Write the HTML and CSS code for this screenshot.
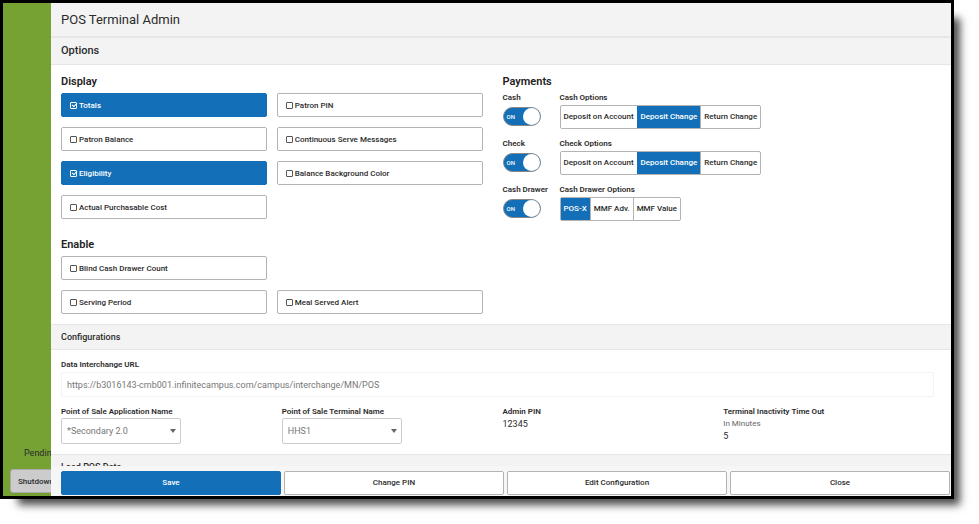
FILE: index.html
```html
<!DOCTYPE html>
<html lang="en">
<head>
    <meta charset="UTF-8">
    <meta name="viewport" content="width=device-width, initial-scale=1.0">
    <title>POS Terminal Admin</title>
    <link rel="stylesheet" href="styles.css">
</head>
<body>

    <div class="window">
        <aside class="sidebar">
            <p>Pending</p>
            <button type="button" class="shutdown">Shutdown</button>
        </aside>

        <main class="panel">
            <h1>POS Terminal Admin</h1>

            <div class="content">
                <h2 class="band">Options</h2>

                <div class="options">
                    <section class="settings">
                        <h3>Display</h3>
                        <div class="tiles">
                            <label class="tile"><input type="checkbox" checked>Totals</label>
                            <label class="tile"><input type="checkbox">Patron PIN</label>
                            <label class="tile"><input type="checkbox">Patron Balance</label>
                            <label class="tile"><input type="checkbox">Continuous Serve Messages</label>
                            <label class="tile"><input type="checkbox" checked>Eligibility</label>
                            <label class="tile"><input type="checkbox">Balance Background Color</label>
                            <label class="tile"><input type="checkbox">Actual Purchasable Cost</label>
                        </div>

                        <h3>Enable</h3>
                        <div class="tiles">
                            <label class="tile wide-row"><input type="checkbox">Blind Cash Drawer Count</label>
                            <label class="tile"><input type="checkbox">Serving Period</label>
                            <label class="tile"><input type="checkbox">Meal Served Alert</label>
                        </div>
                    </section>

                    <section class="payments">
                        <h3>Payments</h3>
                        <div class="payment">
                            <div>
                                <label class="caption" for="cash">Cash</label>
                                <label class="toggle"><input type="checkbox" id="cash" checked><span>ON</span></label>
                            </div>
                            <div role="radiogroup" aria-labelledby="cashOptions">
                                <span class="caption" id="cashOptions">Cash Options</span>
                                <div class="segments">
                                    <label><input type="radio" name="cash">Deposit on Account</label>
                                    <label><input type="radio" name="cash" checked>Deposit Change</label>
                                    <label><input type="radio" name="cash">Return Change</label>
                                </div>
                            </div>
                        </div>
                        <div class="payment">
                            <div>
                                <label class="caption" for="check">Check</label>
                                <label class="toggle"><input type="checkbox" id="check" checked><span>ON</span></label>
                            </div>
                            <div role="radiogroup" aria-labelledby="checkOptions">
                                <span class="caption" id="checkOptions">Check Options</span>
                                <div class="segments">
                                    <label><input type="radio" name="check">Deposit on Account</label>
                                    <label><input type="radio" name="check" checked>Deposit Change</label>
                                    <label><input type="radio" name="check">Return Change</label>
                                </div>
                            </div>
                        </div>
                        <div class="payment">
                            <div>
                                <label class="caption" for="drawer">Cash Drawer</label>
                                <label class="toggle"><input type="checkbox" id="drawer" checked><span>ON</span></label>
                            </div>
                            <div role="radiogroup" aria-labelledby="drawerOptions">
                                <span class="caption" id="drawerOptions">Cash Drawer Options</span>
                                <div class="segments">
                                    <label><input type="radio" name="drawer" checked>POS-X</label>
                                    <label><input type="radio" name="drawer">MMF Adv.</label>
                                    <label><input type="radio" name="drawer">MMF Value</label>
                                </div>
                            </div>
                        </div>
                    </section>
                </div>

                <h2 class="band small">Configurations</h2>

                <div class="config">
                    <div class="url">
                        <label class="caption" for="url">Data Interchange URL</label>
                        <input type="text" id="url" value="https://b3016143-cmb001.infinitecampus.com/campus/interchange/MN/POS" readonly>
                    </div>
                    <div>
                        <label class="caption" for="appName">Point of Sale Application Name</label>
                        <div class="select">
                            <select id="appName"><option>*Secondary 2.0</option></select>
                        </div>
                    </div>
                    <div>
                        <label class="caption" for="terminalName">Point of Sale Terminal Name</label>
                        <div class="select">
                            <select id="terminalName"><option>HHS1</option></select>
                        </div>
                    </div>
                    <div>
                        <span class="caption">Admin PIN</span>
                        <p class="value">12345</p>
                    </div>
                    <div>
                        <span class="caption">Terminal Inactivity Time Out</span>
                        <p class="hint">In Minutes</p>
                        <p class="value">5</p>
                    </div>
                </div>

                <h2 class="band small">Load POS Data</h2>
            </div>

            <footer>
                <button type="button" class="primary">Save</button>
                <button type="button">Change PIN</button>
                <button type="button">Edit Configuration</button>
                <button type="button">Close</button>
            </footer>
        </main>
    </div>

</body>
</html>
```

FILE: styles.css
```css
* {
    box-sizing: border-box;
}

body {
    margin: 0;
    padding: 0 25px 25px 0;
    height: 100vh;
    background-color: #fff;
    color: #2b2b2b;
    font-family: Roboto, "Liberation Sans", sans-serif;
    font-size: 8px;
    font-weight: 500;
}

h1, h2, h3, p {
    margin: 0;
}

button, input, select {
    margin: 0;
    font: inherit;
    color: inherit;
}

.window {
    display: flex;
    height: 100%;
    border: 3px solid #000;
    box-shadow: 12px 12px 8px -6px rgba(0, 0, 0, 0.7);
}

/* Home screen behind the panel */
.sidebar {
    display: flex;
    flex-direction: column;
    justify-content: flex-end;
    flex: 0 0 48px;
    padding: 0 0 3px 7px;
    overflow: hidden;
    background-color: #76a133;
}

.sidebar p {
    padding-left: 14px;
    margin-bottom: 8px;
    font-size: 9px;
    font-weight: 400;
    line-height: 16px;
}

.shutdown {
    width: 60px;
    height: 24px;
    padding: 0 7px;
    border: 1px solid #aaa;
    border-radius: 3px;
    background-color: #ccc;
    text-align: left;
}

.panel {
    display: flex;
    flex-direction: column;
    flex: 1;
    min-width: 0;
    background-color: #fff;
}

h1 {
    flex: none;
    padding: 0 10px;
    border-bottom: 2px solid #e6e6e6;
    background-color: #f3f3f3;
    font-size: 13px;
    font-weight: 400;
    line-height: 33px;
}

.content {
    flex: 1;
    min-height: 0;
    overflow: hidden;
}

.band {
    padding: 0 10px;
    border-bottom: 1px solid #e6e6e6;
    background-color: #f3f3f3;
    font-size: 11px;
    font-weight: 500;
    line-height: 26px;
}

.band.small {
    border-top: 1px solid #e6e6e6;
    font-size: 9px;
    line-height: 24px;
}

.options {
    display: grid;
    grid-template-columns: 1fr 1fr;
    padding: 9px 7px 10px 10px;
}

h3 {
    margin-bottom: 3px;
    color: #222;
    font-size: 11px;
    font-weight: 600;
    line-height: 16px;
}

.settings {
    padding-right: 20px;
}

.tiles {
    display: grid;
    grid-template-columns: 1fr 1fr;
    gap: 10px;
}

.tiles + h3 {
    margin-top: 18px;
}

.tile {
    display: flex;
    align-items: center;
    gap: 2px;
    height: 24px;
    padding: 0 8px;
    border: 1px solid #b3b3b3;
    border-radius: 2px;
}

.tile.wide-row {
    margin-right: calc(50% + 5px);
    grid-column: span 2;
}

.tile input {
    position: relative;
    width: 7px;
    height: 7px;
    border: 1px solid #555;
    border-radius: 1px;
    appearance: none;
}

.tile input:checked {
    border-color: #fff;
}

.tile input:checked::after {
    content: "";
    position: absolute;
    top: 0;
    left: 1px;
    width: 4px;
    height: 2px;
    border-bottom: 1px solid #fff;
    border-left: 1px solid #fff;
    transform: rotate(-45deg);
}

.tile:has(:checked) {
    border-color: #126fb8;
    background-color: #126fb8;
    color: #fff;
}

.caption {
    display: block;
    font-weight: 600;
    line-height: 12px;
    white-space: nowrap;
}

.payments h3 {
    margin-bottom: 2px;
}

.payment {
    display: grid;
    grid-template-columns: 57px auto;
    justify-content: start;
    margin-bottom: 9px;
}

.toggle {
    display: block;
    position: relative;
    width: 38px;
    height: 19px;
    margin-top: 3px;
    border: 1px solid #888;
    border-radius: 10px;
    background-color: #126fb8;
    color: #fff;
    font-size: 6px;
    line-height: 17px;
}

.toggle span {
    padding-left: 3px;
}

.toggle::after {
    content: "";
    position: absolute;
    top: 0;
    right: 0;
    width: 17px;
    height: 17px;
    border-radius: 50%;
    background-color: #fff;
}

.toggle input,
.segments input {
    position: absolute;
    opacity: 0;
}

.segments {
    display: flex;
    width: max-content;
    margin-top: 1px;
    border: 1px solid #b3b3b3;
    border-radius: 2px;
}

.segments label {
    position: relative;
    padding: 0 3px;
    line-height: 22px;
}

.segments label + label {
    border-left: 1px solid #b3b3b3;
}

.segments label:has(:checked) {
    border-color: #126fb8;
    background-color: #126fb8;
    color: #fff;
}

.config {
    display: grid;
    grid-template-columns: repeat(4, 1fr);
    row-gap: 9px;
    padding: 9px 7px 10px 10px;
}

.url {
    grid-column: 1 / -1;
    padding-right: 10px;
}

.url input {
    width: 100%;
    height: 25px;
    margin-top: 1px;
    padding: 0 5px;
    border: 1px solid #f3f3f3;
    border-radius: 2px;
    background-color: #fff;
    color: #777;
    font-size: 9px;
    font-weight: 400;
}

.select {
    position: relative;
    width: 120px;
}

.select select {
    display: block;
    width: 100%;
    height: 26px;
    padding: 0 5px;
    border: 1px solid #ccc;
    border-radius: 2px;
    background-color: #fff;
    color: #777;
    font-size: 9px;
    font-weight: 400;
    appearance: none;
}

.select::after {
    content: "";
    position: absolute;
    top: 11px;
    right: 5px;
    border: 3px solid transparent;
    border-top: 4px solid #666;
    border-bottom: 0;
}

.value {
    font-size: 9px;
    font-weight: 400;
    line-height: 13px;
}

.hint {
    color: #666;
    font-weight: 400;
    line-height: 12px;
}

footer {
    display: grid;
    grid-template-columns: repeat(4, 1fr);
    flex: none;
    gap: 3px;
    padding: 5px 1px 1px 10px;
    background-color: #f6f6f6;
}

footer button {
    height: 24px;
    padding: 0 0 1px;
    border: 1px solid #b3b3b3;
    border-radius: 2px;
    background-color: #fff;
}

footer .primary {
    border-color: #126fb8;
    background-color: #126fb8;
    color: #fff;
}
```
